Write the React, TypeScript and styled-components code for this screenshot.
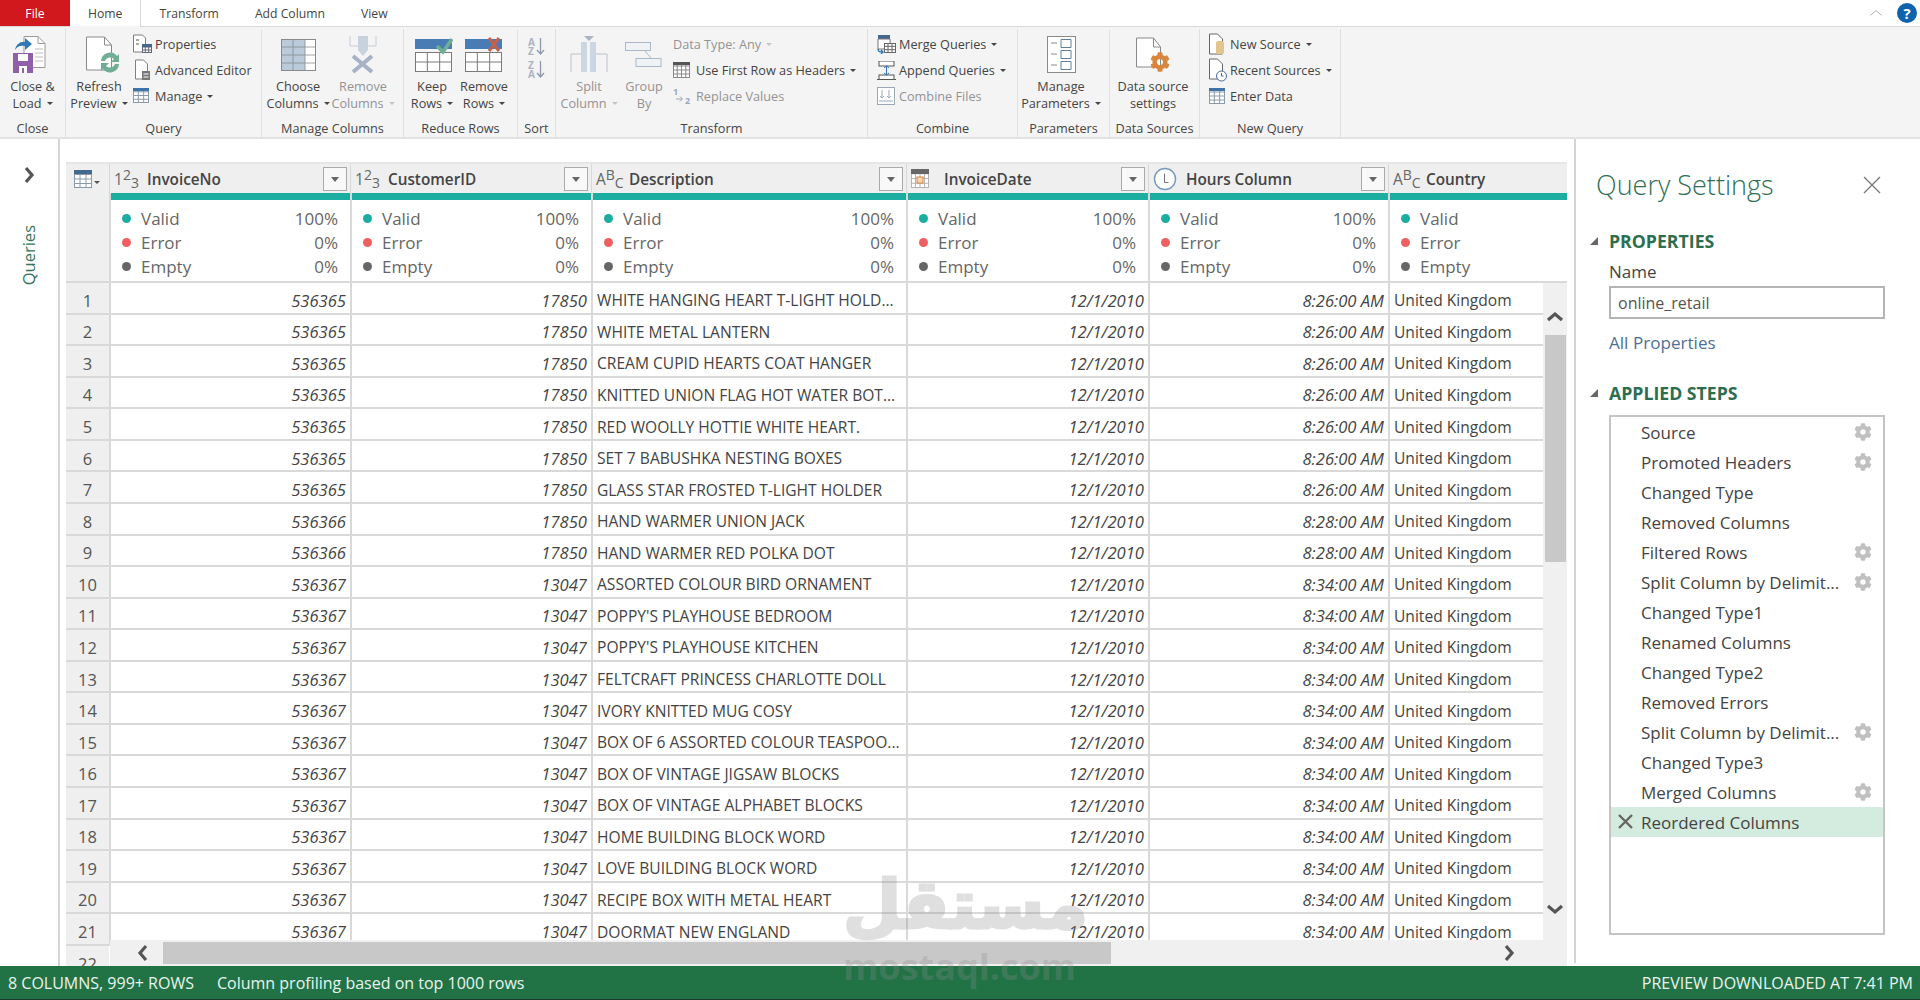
import React from "react";
import styled, { createGlobalStyle } from "styled-components";
import { FaCog } from "react-icons/fa";

const Global = createGlobalStyle`
  html, body { margin: 0; padding: 0; background: #fff; }
  body { font-family: "Open Sans", "Noto Sans", sans-serif; color: #444; }
  * { box-sizing: border-box; }
`;

const Page = styled.div`
  position: relative;
  width: 1920px;
  height: 1000px;
  overflow: hidden;
  display: flex;
  flex-direction: column;
  background: #fff;
`;

/* ---------- tabs ---------- */
const TabBar = styled.div`
  height: 27px;
  flex: none;
  display: flex;
  align-items: stretch;
  border-bottom: 1px solid #d8d8d8;
  font-size: 12.2px;
`;
const FileTab = styled.div`
  width: 70px;
  height: 26px;
  background: #d1181c;
  color: #fff;
  display: flex;
  align-items: center;
  justify-content: center;
`;
const Tab = styled.div<{ $active?: boolean }>`
  padding: 0 18px;
  height: ${(p) => (p.$active ? "27px" : "26px")};
  display: flex;
  align-items: center;
  color: #444;
  background: ${(p) => (p.$active ? "linear-gradient(#fff 90%, #f5f4f5)" : "#fff")};
  border-right: ${(p) => (p.$active ? "1px solid #d8d8d8" : "none")};
`;
const TabSpacer = styled.div`flex: 1;`;
const WindowControls = styled.div`
  display: flex;
  align-items: center;
  gap: 13px;
  padding-right: 3px;
`;
const HelpDot = styled.div`
  width: 20px;
  height: 20px;
  border-radius: 50%;
  background: #0f63ad;
  color: #fff;
  font-weight: 700;
  font-size: 15px;
  display: flex;
  align-items: center;
  justify-content: center;
`;

/* ---------- ribbon ---------- */
const Ribbon = styled.div`
  height: 112px;
  flex: none;
  display: flex;
  background: #f5f4f5;
  border-bottom: 2px solid #e2e2e2;
  font-size: 12.7px;
  color: #444;
`;
const Group = styled.div<{ $w: number }>`
  width: ${(p) => p.$w}px;
  flex: none;
  display: flex;
  flex-direction: column;
  margin-top: 2px;
  border-right: 1px solid #e0e0e0;
`;
const GroupBody = styled.div<{ $pl?: number }>`
  flex: 1;
  display: flex;
  padding-left: ${(p) => p.$pl ?? 0}px;
`;
const GroupLabel = styled.div`
  height: 18px;
  line-height: 18px;
  text-align: center;
  white-space: nowrap;
`;
const Large = styled.div<{ $w: number; $off?: boolean }>`
  width: ${(p) => p.$w}px;
  flex: none;
  display: flex;
  flex-direction: column;
  align-items: center;
  color: ${(p) => (p.$off ? "#939393" : "#444")};
  line-height: 17px;
  white-space: nowrap;
  text-align: center;
`;
const IconSlot = styled.div<{ $dx?: number }>`
  height: 49px;
  width: 100%;
  display: flex;
  align-items: center;
  justify-content: center;
  padding-top: 2px;
  padding-left: ${(p) => Math.max(p.$dx ?? 0, 0)}px;
  padding-right: ${(p) => Math.max(-(p.$dx ?? 0), 0)}px;
`;
const Caret = styled.span<{ $off?: boolean }>`
  display: inline-block;
  width: 0;
  height: 0;
  margin-left: 5px;
  vertical-align: 3px;
  border-left: 3.5px solid transparent;
  border-right: 3.5px solid transparent;
  border-top: 3.5px solid ${(p) => (p.$off ? "#c4c4c4" : "#444")};
`;
const SmallCol = styled.div<{ $ml?: number }>`
  display: flex;
  flex-direction: column;
  padding-top: 2px;
  margin-left: ${(p) => p.$ml ?? 0}px;
`;
const Small = styled.div<{ $off?: boolean }>`
  height: 26px;
  display: flex;
  align-items: center;
  white-space: nowrap;
  color: ${(p) => (p.$off ? "#939393" : "#444")};
`;
const SmallIcon = styled.span<{ $w?: number }>`
  width: ${(p) => p.$w ?? 22}px;
  flex: none;
  display: flex;
  align-items: center;
`;
const SortCol = styled.div`
  width: 100%;
  display: flex;
  flex-direction: column;
  align-items: center;
  gap: 4px;
  padding-top: 8px;
`;
const GearBadge = styled.span`
  display: flex;
  margin-left: -18px;
  margin-top: 14px;
  color: #d9853b;
`;

/* ---------- main ---------- */
const Main = styled.div`
  flex: 1;
  min-height: 0;
  display: flex;
`;
const Rail = styled.div`
  width: 60px;
  flex: none;
  border-right: 2px solid #d4d4d4;
  display: flex;
  flex-direction: column;
  align-items: center;
  padding-top: 26px;
`;
const RailLabel = styled.div`
  margin-top: 40px;
  writing-mode: vertical-rl;
  transform: rotate(180deg);
  color: #35735a;
  font-size: 16.5px;
  line-height: 20px;
`;
const GridArea = styled.div`
  flex: 1;
  min-width: 0;
  padding: 23px 7px 0 6px;
`;
const GridFrame = styled.div`
  position: relative;
  height: 100%;
  overflow: hidden;
`;
const COLS = "43px 241px 241px 315px 242px 240px 179px";
const HeadRow = styled.div`
  display: grid;
  grid-template-columns: ${COLS};
  height: 31px;
  background: #efefef;
  border-top: 2px solid #e6e6e6;
`;
const HeadCorner = styled.div`
  display: flex;
  align-items: center;
  padding-left: 8px;
  gap: 1px;
`;
const HeadCell = styled.div`
  position: relative;
  display: flex;
  align-items: center;
  border-left: 1px solid #d8d8d8;
  padding-left: 4px;
  min-width: 0;
`;
const TypeIcon = styled.span`
  width: 33px;
  flex: none;
  font-size: 15.5px;
  color: #666;
  white-space: nowrap;
  display: flex;
  align-items: center;
`;
const Sup = styled.span`
  font-size: 14px;
  display: inline-block;
  transform: translateY(-4px);
`;
const Sub = styled.span`
  font-size: 14px;
  display: inline-block;
  transform: translateY(4px);
`;
const HeadName = styled.span`
  font-weight: 600;
  font-size: 15.3px;
  color: #444;
`;
const FilterBtn = styled.span`
  position: absolute;
  right: 3px;
  top: 3px;
  width: 24px;
  height: 24px;
  background: #f8f8f8;
  border: 1px solid #aaa;
  display: flex;
  align-items: center;
  justify-content: center;
`;
const FilterArrow = styled.span`
  width: 0;
  height: 0;
  border-left: 4px solid transparent;
  border-right: 4px solid transparent;
  border-top: 5px solid #666;
`;
const Profile = styled.div`
  display: grid;
  grid-template-columns: ${COLS};
  height: 90px;
  border-bottom: 2px solid #d9d9d9;
`;
const ProfileStub = styled.div`
  background: #efefef;
`;
const ProfileCell = styled.div`
  border-left: 2px solid #d9d9d9;
  display: flex;
  flex-direction: column;
`;
const TealBar = styled.div`
  height: 7px;
  background: #1bad9f;
  margin-bottom: 6px;
  flex: none;
`;
const ProfileLine = styled.div`
  height: 24.3px;
  display: flex;
  align-items: center;
  padding: 0 12px 0 11px;
  font-size: 17px;
  color: #666;
`;
const Dot = styled.span<{ $c: string }>`
  width: 9px;
  height: 9px;
  border-radius: 50%;
  background: ${(p) => p.$c};
  margin-right: 10px;
  flex: none;
`;
const Pct = styled.span`
  margin-left: auto;
`;
const DataRow = styled.div`
  display: grid;
  grid-template-columns: ${COLS};
  height: 31.57px;
`;
const RowNo = styled.div`
  background: #efefef;
  border-bottom: 2px solid #d9d9d9;
  display: flex;
  align-items: center;
  justify-content: center;
  padding-top: 5px;
  font-size: 16.5px;
  color: #555;
`;
const Cell = styled.div<{ $num?: boolean }>`
  border-left: 2px solid #d9d9d9;
  border-bottom: 2px solid #d9d9d9;
  display: flex;
  align-items: center;
  justify-content: ${(p) => (p.$num ? "flex-end" : "flex-start")};
  padding: 5px ${(p) => (p.$num ? "4px" : "0")} 0 ${(p) => (p.$num ? "0" : "4px")};
  font-size: ${(p) => (p.$num ? "16.6px" : "15.6px")};
  font-style: ${(p) => (p.$num ? "italic" : "normal")};
  color: #444;
  white-space: nowrap;
  overflow: hidden;
`;
const VScroll = styled.div`
  position: absolute;
  right: 0;
  top: 121px;
  bottom: 26px;
  width: 24px;
  background: #f0f0f0;
  display: flex;
  justify-content: center;
`;
const VThumb = styled.div`
  position: absolute;
  left: 2px;
  right: 1px;
  top: 52px;
  height: 227px;
  background: #c8c8c8;
`;
const ScrollArrow = styled.span<{ $pos: string }>`
  position: absolute;
  ${(p) => p.$pos}
  display: flex;
`;
const HScroll = styled.div`
  position: absolute;
  left: 44px;
  right: 0;
  bottom: 0;
  height: 26px;
  background: #f0f0f0;
`;
const HThumb = styled.div`
  position: absolute;
  left: 53px;
  width: 948px;
  top: 2px;
  height: 22px;
  background: #c8c8c8;
`;

/* ---------- settings panel ---------- */
const Panel = styled.div`
  width: 346px;
  flex: none;
  border-left: 2px solid #d4d4d4;
  padding: 26px 0 0 33px;
  margin-bottom: 3px;
`;
const PanelHead = styled.div`
  height: 40px;
  margin-left: -13px;
  width: 285px;
  display: flex;
  align-items: center;
  justify-content: space-between;
`;
const PanelTitle = styled.div`
  font-size: 27px;
  font-weight: 300;
  line-height: 40px;
  color: #2f6f55;
`;
const SectionHead = styled.div<{ $mt: number }>`
  margin-top: ${(p) => p.$mt}px;
  margin-left: -19px;
  height: 24px;
  display: flex;
  align-items: center;
  font-size: 17.7px;
  font-weight: 700;
  color: #2c6e50;
`;
const Tri = styled.span`
  width: 0;
  height: 0;
  margin-right: 11px;
  border-left: 8px solid transparent;
  border-bottom: 8px solid #666;
`;
const FieldLabel = styled.div`
  margin-top: 8px;
  font-size: 17px;
  line-height: 22px;
  color: #444;
`;
const NameInput = styled.div`
  margin-top: 3px;
  width: 276px;
  height: 33px;
  border: 2px solid #b4b4b4;
  padding-left: 7px;
  display: flex;
  align-items: center;
  font-size: 16px;
  color: #555;
`;
const PanelLink = styled.div`
  margin-top: 12px;
  font-size: 17.1px;
  line-height: 24px;
  color: #4e7196;
`;
const Steps = styled.div`
  margin-top: 10px;
  width: 276px;
  height: 520px;
  border: 2px solid #c4c4c4;
`;
const Step = styled.div<{ $sel?: boolean }>`
  position: relative;
  height: 30px;
  display: flex;
  align-items: center;
  padding-left: 30px;
  font-size: 17px;
  color: #444;
  white-space: nowrap;
  background: ${(p) => (p.$sel ? "#d3ecdf" : "transparent")};
`;
const StepGear = styled.span`
  position: absolute;
  right: 11px;
  top: 6px;
  display: flex;
  color: #c0c0c0;
`;
const StepX = styled.span`
  position: absolute;
  left: 6px;
  top: 6px;
  display: flex;
`;

/* ---------- status ---------- */
const Status = styled.div`
  height: 34px;
  flex: none;
  background: #217346;
  border-bottom: 1px solid #1c3a2a;
  color: #e9f3ee;
  font-size: 16px;
  display: flex;
  align-items: center;
  padding: 0 7px 0 8px;
  white-space: nowrap;
`;
const StatusNote = styled.span`
  margin-left: 23px;
`;
const StatusRight = styled.span`
  margin-left: auto;
`;

/* ---------- watermark ---------- */
const Watermark = styled.div`
  position: absolute;
  left: 843px;
  top: 861px;
  width: 230px;
  pointer-events: none;
  text-align: center;
  color: #8c8c8c;
  opacity: 0.27;
  font-weight: 700;
  white-space: nowrap;
`;
const WatermarkAr = styled.div`
  font-family: "DejaVu Sans", sans-serif;
  font-size: 67px;
  line-height: 88px;
  -webkit-text-stroke: 3px #8c8c8c;
`;
const WatermarkEn = styled.div`
  font-family: "Open Sans", sans-serif;
  font-size: 36px;
  line-height: 36px;
`;

/* ---------- icons ---------- */
const G = "#7f7f7f";
const CloseLoadIcon = () => (
  <svg width="38" height="40" viewBox="0 0 38 40">
    <path d="M13 1.5h14l7 7v24H13z" fill="#fff" stroke="#9a9a9a" />
    <path d="M27 1.5v7h7" fill="none" stroke="#9a9a9a" />
    <path d="M24 14h8M24 18h8M24 22h8M24 26h8" stroke="#bbb" />
    <path d="M4 15c1-6 6-9 10-8V3l7 6-7 6v-4c-4-1-8 0-10 4z" fill="#2f77b5" />
    <path d="M2 18h20v20H2z" fill="#8f5fa9" />
    <path d="M7 19h10v7H7z" fill="#fff" />
    <path d="M8 31h8v7H8z" fill="#fff" />
    <path d="M11 33h2v5h-2z" fill="#8f5fa9" />
  </svg>
);
const RefreshIcon = () => (
  <svg width="40" height="38" viewBox="0 0 40 38">
    <path d="M.5 1h18l7 8v25H.5z" fill="#fff" stroke="#8a8a8a" />
    <path d="M18.500 1v8h7" fill="none" stroke="#8a8a8a" />
    <path d="M15 25a9 9 0 0 1 16-5l2-2v8h-8l3-3a5.500 5.500 0 0 0-9 2z" fill="#6fae94" />
    <path d="M33 28a9 9 0 0 1-16 5l-2 2v-8h8l-3 3a5.500 5.500 0 0 0 9-2z" fill="#6fae94" />
  </svg>
);
const Grid = ({ w, h, rows, cols, c = "#8a8a8a", head }: { w: number; h: number; rows: number; cols: number; c?: string; head?: string }) => {
  const lines: string[] = [];
  for (let i = 1; i < rows; i++) lines.push(`M0 ${(h * i) / rows}H${w}`);
  for (let i = 1; i < cols; i++) lines.push(`M${(w * i) / cols} 0V${h}`);
  return (
    <g>
      <rect x=".5" y=".5" width={w - 1} height={h - 1} fill="#fff" stroke={c} />
      <path d={lines.join("")} stroke={c} fill="none" />
      {head && <rect x="0" y="0" width={w} height="3" fill={head} />}
    </g>
  );
};
const PropertiesIcon = () => (
  <svg width="20" height="20" viewBox="0 0 20 20">
    <path d="M.5 1h9l3 3v14H.5z" fill="#fff" stroke={G} />
    <path d="M3 6h3M3 10h3" stroke="#555" />
    <g transform="translate(9 10)">
      <Grid w={10} h={9} rows={3} cols={3} c="#667" head="#44698f" />
    </g>
  </svg>
);
const EditorIcon = () => (
  <svg width="20" height="22" viewBox="0 0 20 22">
    <path d="M2.500 1h8l4 4v15h-12z" fill="#fff" stroke={G} />
    <rect x="9" y="12" width="8" height="9" fill="#777" />
    <path d="M10.500 15h5M10.500 18h5" stroke="#fff" />
  </svg>
);
const ManageIcon = () => (
  <svg width="17" height="16" viewBox="0 0 17 16">
    <Grid w={16} h={15} rows={4} cols={3} c="#8a9aaa" />
    <rect width="16" height="3" fill="#3f74a8" />
  </svg>
);
const ChooseIcon = () => (
  <svg width="35" height="32" viewBox="0 0 35 32">
    <rect x=".5" y=".5" width="34" height="31" fill="#fff" stroke="#8a8a8a" />
    <rect x="1" y="1" width="23" height="30" fill="#b9cadb" />
    <path d="M0 8h34M0 16h34M0 24h34M12 0v32M24 0v32" stroke="#8a8a8a" strokeWidth=".8" />
  </svg>
);
const RemoveColIcon = () => (
  <svg width="28" height="38" viewBox="0 0 28 38">
    <path d="M1 0v10h26V0" fill="none" stroke="#c5ced9" />
    <path d="M9 0h10v14l-5 6-5-6z" fill="#c7d2de" />
    <path d="M4 20l19 16M23 20L4 36" stroke="#a6b2c6" strokeWidth="4" />
  </svg>
);
const RowsIcon = ({ red }: { red?: boolean }) => (
  <svg width="38" height="36" viewBox="0 0 38 36">
    <rect x="0" y="2" width="37" height="10" fill="#477cb4" />
    <g transform="translate(0 15)">
      <Grid w={37} h={20} rows={2} cols={3} c="#7a7a7a" />
    </g>
    {red ? (
      <path d="M24 1l10 13M34 1L24 14" stroke="#c4604a" strokeWidth="3" />
    ) : (
      <path d="M22 9l6 6 9-13" fill="none" stroke="#6fae94" strokeWidth="3.500" />
    )}
  </svg>
);
const SortIcon = ({ top, bot }: { top: string; bot: string }) => (
  <svg width="18" height="19" viewBox="0 0 18 19" overflow="visible">
    <text x="0" y="9" fontFamily="Open Sans" fontWeight="700" fontSize="10" fill="#aab3c2">{top}</text>
    <text x="0" y="18" fontFamily="Open Sans" fontWeight="700" fontSize="10" fill="#aab3c2">{bot}</text>
    <path d="M12.500 1v16M9 13l3.500 4 3.500-4" fill="none" stroke="#8e98a8" strokeWidth="1.300" />
  </svg>
);
const SplitIcon = () => (
  <svg width="38" height="38" viewBox="0 0 38 38">
    <path d="M1 36V18h11M37 36V18H26" fill="none" stroke="#b8c2cd" />
    <rect x="11" y="6" width="6" height="30" fill="#ccd6e0" />
    <rect x="20" y="6" width="6" height="30" fill="#ccd6e0" />
    <path d="M14 0h10l-5 5z" fill="#aab4c2" />
  </svg>
);
const GroupIcon = () => (
  <svg width="38" height="26" viewBox="0 0 38 26">
    <rect x=".5" y=".5" width="25" height="8" fill="#f0f3f6" stroke="#aab8c8" />
    <rect x="11" y="16.500" width="25" height="8" fill="#f0f3f6" stroke="#aab8c8" />
    <path d="M20 9l6 7" stroke="#aab8c8" />
  </svg>
);
const FirstRowIcon = () => (
  <svg width="18" height="17" viewBox="0 0 18 17">
    <Grid w={17} h={16} rows={4} cols={4} c="#888" />
    <rect width="17" height="3" fill="#555" />
  </svg>
);
const ReplaceIcon = () => (
  <svg width="20" height="20" viewBox="0 0 20 20">
    <text x="0" y="9" fontFamily="Open Sans" fontSize="9" fontWeight="700" fill="#9aa8b8">1</text>
    <path d="M3 13h6M7 10.500l2.500 2.500L7 15.500" fill="none" stroke="#9aa8b8" />
    <text x="12" y="18" fontFamily="Open Sans" fontSize="9" fontWeight="700" fill="#9aa8b8">2</text>
  </svg>
);
const MergeIcon = () => (
  <svg width="20" height="19" viewBox="0 0 20 19">
    <path d="M1 0h12v4H1z" fill="#44698f" />
    <path d="M1 4h12v10H1z" fill="#fff" stroke="#777" />
    <g transform="translate(7 8)">
      <Grid w={12} h={10} rows={3} cols={3} c="#666" />
    </g>
    <path d="M1 14c0 3 2 3 5 3M4 15l2 2-2 2" fill="none" stroke="#2f77b5" strokeWidth="1.400" />
  </svg>
);
const AppendIcon = () => (
  <svg width="19" height="19" viewBox="0 0 19 19">
    <rect x="2" y="0" width="15" height="5" fill="#fff" stroke="#555" />
    <rect x="2" y="14" width="15" height="4.500" fill="#fff" stroke="#555" />
    <path d="M9.500 5v9M7 7l2.500-2L12 7M7 12l2.500 2 2.500-2" fill="none" stroke="#2f77b5" />
    <path d="M0 18.500h19" stroke="#555" />
  </svg>
);
const CombineIcon = () => (
  <svg width="18" height="18" viewBox="0 0 18 18">
    <rect x=".5" y=".5" width="17" height="17" fill="#fff" stroke="#9aa8b8" />
    <path d="M5 3v8M3 9l2 2 2-2M12 3v8M10 9l2 2 2-2M2 14h14" fill="none" stroke="#9aa8b8" />
  </svg>
);
const ParamIcon = () => (
  <svg width="29" height="37" viewBox="0 0 29 37">
    <rect x=".5" y=".5" width="28" height="36" fill="#fff" stroke="#8a8a8a" />
    <path d="M4 7h6M4 18h6M4 29h6" stroke="#8a8a8a" />
    <path d="M14 3.500h10v8H14zM14 14.500h10v8H14zM14 25.500h10v8H14z" fill="#fff" stroke="#5f7f9c" />
  </svg>
);
const DataSourceIcon = () => (
  <svg width="32" height="36" viewBox="0 0 32 36">
    <path d="M.5 1h17l7 9v20H.5z" fill="#fff" stroke="#8a8a8a" />
    <path d="M17.500 1v9h7" fill="none" stroke="#8a8a8a" />
  </svg>
);
const NewSourceIcon = () => (
  <svg width="17" height="22" viewBox="0 0 17 22">
    <path d="M.5 1h8l5 5v15H.5z" fill="#fff" stroke="#666" />
    <rect x="7" y="8" width="8" height="13" rx="2" fill="#e2c48d" />
  </svg>
);
const RecentIcon = () => (
  <svg width="18" height="24" viewBox="0 0 18 24">
    <path d="M.5 1h8l5 5v15H.5z" fill="#fff" stroke="#666" />
    <circle cx="12.500" cy="18" r="5" fill="#fff" stroke="#44698f" />
    <path d="M12.500 15v3h2" fill="none" stroke="#44698f" />
  </svg>
);
const EnterIcon = () => (
  <svg width="16" height="16" viewBox="0 0 16 16">
    <Grid w={16} h={16} rows={4} cols={3} c="#8a9aaa" />
    <rect width="16" height="3" fill="#3f74a8" />
  </svg>
);
const TableCornerIcon = () => (
  <>
    <svg width="19" height="18" viewBox="0 0 19 18">
      <Grid w={18} h={18} rows={4} cols={3} c="#8a9aaa" />
      <rect width="18" height="4" fill="#44698f" />
    </svg>
    <svg width="6" height="12" viewBox="0 0 6 12">
      <path d="M0 8h6l-3 3z" fill="#555" />
    </svg>
  </>
);
const CalIcon = () => (
  <svg width="18" height="19" viewBox="0 0 18 19">
    <Grid w={18} h={19} rows={4} cols={4} c="#b5b5b5" />
    <rect width="18" height="5" fill="#666" />
    <rect x="6" y="8" width="6" height="6" fill="#f6d9b5" stroke="#d8853b" />
  </svg>
);
const ClockIcon = () => (
  <svg width="24" height="24" viewBox="0 0 24 24">
    <circle cx="12" cy="12" r="10.500" fill="#fff" stroke="#7a9cc0" strokeWidth="1.500" />
    <path d="M11.500 6.500v9h4" fill="none" stroke="#777" />
  </svg>
);
const Chevron = ({ d, s = 18, w = 3.2, c = "#555" }: { d: "l" | "r" | "u" | "d"; s?: number; w?: number; c?: string }) => {
  const path = { l: "M12 3L6 10l6 7", r: "M7 3l6 7-6 7", u: "M3 13l7-6 7 6", d: "M3 7l7 6 7-6" }[d];
  return (
    <svg width={s} height={s} viewBox="0 0 20 20">
      <path d={path} fill="none" stroke={c} strokeWidth={w} />
    </svg>
  );
};
const Num123 = () => (
  <TypeIcon>1<Sup>2</Sup><Sub>3</Sub></TypeIcon>
);
const Abc = () => (
  <TypeIcon>A<Sup>B</Sup><Sub>C</Sub></TypeIcon>
);

/* ---------- data ---------- */
const DESC = [
  "WHITE HANGING HEART T-LIGHT HOLD...",
  "WHITE METAL LANTERN",
  "CREAM CUPID HEARTS COAT HANGER",
  "KNITTED UNION FLAG HOT WATER BOT...",
  "RED WOOLLY HOTTIE WHITE HEART.",
  "SET 7 BABUSHKA NESTING BOXES",
  "GLASS STAR FROSTED T-LIGHT HOLDER",
  "HAND WARMER UNION JACK",
  "HAND WARMER RED POLKA DOT",
  "ASSORTED COLOUR BIRD ORNAMENT",
  "POPPY'S PLAYHOUSE BEDROOM",
  "POPPY'S PLAYHOUSE KITCHEN",
  "FELTCRAFT PRINCESS CHARLOTTE DOLL",
  "IVORY KNITTED MUG COSY",
  "BOX OF 6 ASSORTED COLOUR TEASPOO...",
  "BOX OF VINTAGE JIGSAW BLOCKS",
  "BOX OF VINTAGE ALPHABET BLOCKS",
  "HOME BUILDING BLOCK WORD",
  "LOVE BUILDING BLOCK WORD",
  "RECIPE BOX WITH METAL HEART",
  "DOORMAT NEW ENGLAND",
];
const rows = DESC.map((d, i) => ({
  n: i + 1,
  inv: i < 7 ? "536365" : i < 9 ? "536366" : "536367",
  cust: i < 9 ? "17850" : "13047",
  d,
  date: "12/1/2010",
  time: i < 7 ? "8:26:00 AM" : i < 9 ? "8:28:00 AM" : "8:34:00 AM",
  country: "United Kingdom",
}));
const HEADERS: { name: string; icon: React.ReactNode; filter: boolean }[] = [
  { name: "InvoiceNo", icon: <Num123 />, filter: true },
  { name: "CustomerID", icon: <Num123 />, filter: true },
  { name: "Description", icon: <Abc />, filter: true },
  { name: "InvoiceDate", icon: <TypeIcon><CalIcon /></TypeIcon>, filter: true },
  { name: "Hours Column", icon: <TypeIcon><ClockIcon /></TypeIcon>, filter: true },
  { name: "Country", icon: <Abc />, filter: false },
];
const STEPS: [string, boolean][] = [
  ["Source", true],
  ["Promoted Headers", true],
  ["Changed Type", false],
  ["Removed Columns", false],
  ["Filtered Rows", true],
  ["Split Column by Delimit...", true],
  ["Changed Type1", false],
  ["Renamed Columns", false],
  ["Changed Type2", false],
  ["Removed Errors", false],
  ["Split Column by Delimit...", true],
  ["Changed Type3", false],
  ["Merged Columns", true],
];

export default function App() {
  return (
    <Page>
      <Global />
      <TabBar>
        <FileTab>File</FileTab>
        <Tab $active>Home</Tab>
        <Tab>Transform</Tab>
        <Tab>Add Column</Tab>
        <Tab>View</Tab>
        <TabSpacer />
        <WindowControls>
          <Chevron d="u" s={16} w={1} c="#999" />
          <HelpDot>?</HelpDot>
        </WindowControls>
      </TabBar>

      <Ribbon>
        <Group $w={66}>
          <GroupBody>
            <Large $w={65}>
              <IconSlot $dx={-6}><CloseLoadIcon /></IconSlot>
              <span>Close &amp;</span>
              <span>Load<Caret /></span>
            </Large>
          </GroupBody>
          <GroupLabel>Close</GroupLabel>
        </Group>

        <Group $w={196}>
          <GroupBody $pl={1}>
            <Large $w={64}>
              <IconSlot $dx={14}><RefreshIcon /></IconSlot>
              <span>Refresh</span>
              <span>Preview<Caret /></span>
            </Large>
            <SmallCol $ml={2}>
              <Small><SmallIcon><PropertiesIcon /></SmallIcon>Properties</Small>
              <Small><SmallIcon><EditorIcon /></SmallIcon>Advanced Editor</Small>
              <Small><SmallIcon><ManageIcon /></SmallIcon>Manage<Caret /></Small>
            </SmallCol>
          </GroupBody>
          <GroupLabel>Query</GroupLabel>
        </Group>

        <Group $w={142}>
          <GroupBody $pl={4}>
            <Large $w={64}>
              <IconSlot><ChooseIcon /></IconSlot>
              <span>Choose</span>
              <span>Columns<Caret /></span>
            </Large>
            <Large $w={66} $off>
              <IconSlot><RemoveColIcon /></IconSlot>
              <span>Remove</span>
              <span>Columns<Caret $off /></span>
            </Large>
          </GroupBody>
          <GroupLabel>Manage Columns</GroupLabel>
        </Group>

        <Group $w={114}>
          <GroupBody $pl={4}>
            <Large $w={48}>
              <IconSlot $dx={4}><RowsIcon /></IconSlot>
              <span>Keep</span>
              <span>Rows<Caret /></span>
            </Large>
            <Large $w={56}>
              <IconSlot><RowsIcon red /></IconSlot>
              <span>Remove</span>
              <span>Rows<Caret /></span>
            </Large>
          </GroupBody>
          <GroupLabel>Reduce Rows</GroupLabel>
        </Group>

        <Group $w={38}>
          <GroupBody>
            <SortCol>
              <SortIcon top="A" bot="Z" />
              <SortIcon top="Z" bot="A" />
            </SortCol>
          </GroupBody>
          <GroupLabel>Sort</GroupLabel>
        </Group>

        <Group $w={312}>
          <GroupBody $pl={2}>
            <Large $w={62} $off>
              <IconSlot><SplitIcon /></IconSlot>
              <span>Split</span>
              <span>Column<Caret $off /></span>
            </Large>
            <Large $w={48} $off>
              <IconSlot><GroupIcon /></IconSlot>
              <span>Group</span>
              <span>By</span>
            </Large>
            <SmallCol $ml={5}>
              <Small $off>Data Type: Any<Caret $off /></Small>
              <Small><SmallIcon $w={23}><FirstRowIcon /></SmallIcon>Use First Row as Headers<Caret /></Small>
              <Small $off><SmallIcon $w={23}><ReplaceIcon /></SmallIcon>Replace Values</Small>
            </SmallCol>
          </GroupBody>
          <GroupLabel>Transform</GroupLabel>
        </Group>

        <Group $w={150}>
          <GroupBody $pl={9}>
            <SmallCol>
              <Small><SmallIcon><MergeIcon /></SmallIcon>Merge Queries<Caret /></Small>
              <Small><SmallIcon><AppendIcon /></SmallIcon>Append Queries<Caret /></Small>
              <Small $off><SmallIcon><CombineIcon /></SmallIcon>Combine Files</Small>
            </SmallCol>
          </GroupBody>
          <GroupLabel>Combine</GroupLabel>
        </Group>

        <Group $w={92}>
          <GroupBody>
            <Large $w={86}>
              <IconSlot><ParamIcon /></IconSlot>
              <span>Manage</span>
              <span>Parameters<Caret /></span>
            </Large>
          </GroupBody>
          <GroupLabel>Parameters</GroupLabel>
        </Group>

        <Group $w={90}>
          <GroupBody>
            <Large $w={86}>
              <IconSlot>
                <DataSourceIcon />
                <GearBadge><FaCog size={20} /></GearBadge>
              </IconSlot>
              <span>Data source</span>
              <span>settings</span>
            </Large>
          </GroupBody>
          <GroupLabel>Data Sources</GroupLabel>
        </Group>

        <Group $w={141}>
          <GroupBody $pl={9}>
            <SmallCol>
              <Small><SmallIcon $w={21}><NewSourceIcon /></SmallIcon>New Source<Caret /></Small>
              <Small><SmallIcon $w={21}><RecentIcon /></SmallIcon>Recent Sources<Caret /></Small>
              <Small><SmallIcon $w={21}><EnterIcon /></SmallIcon>Enter Data</Small>
            </SmallCol>
          </GroupBody>
          <GroupLabel>New Query</GroupLabel>
        </Group>
      </Ribbon>

      <Main>
        <Rail>
          <Chevron d="r" s={20} />
          <RailLabel>Queries</RailLabel>
        </Rail>
        <GridArea>
          <GridFrame>
            <HeadRow>
              <HeadCorner><TableCornerIcon /></HeadCorner>
              {HEADERS.map((h) => (
                <HeadCell key={h.name}>
                  {h.icon}
                  <HeadName>{h.name}</HeadName>
                  {h.filter && <FilterBtn><FilterArrow /></FilterBtn>}
                </HeadCell>
              ))}
            </HeadRow>
            <Profile>
              <ProfileStub />
              {HEADERS.map((h) => (
                <ProfileCell key={h.name}>
                  <TealBar />
                  <ProfileLine><Dot $c="#1bad9f" />Valid{h.filter && <Pct>100%</Pct>}</ProfileLine>
                  <ProfileLine><Dot $c="#ee6060" />Error{h.filter && <Pct>0%</Pct>}</ProfileLine>
                  <ProfileLine><Dot $c="#666" />Empty{h.filter && <Pct>0%</Pct>}</ProfileLine>
                </ProfileCell>
              ))}
            </Profile>
            {rows.map((r) => (
              <DataRow key={r.n}>
                <RowNo>{r.n}</RowNo>
                <Cell $num>{r.inv}</Cell>
                <Cell $num>{r.cust}</Cell>
                <Cell>{r.d}</Cell>
                <Cell $num>{r.date}</Cell>
                <Cell $num>{r.time}</Cell>
                <Cell>{r.country}</Cell>
              </DataRow>
            ))}
            <DataRow>
              <RowNo>22</RowNo>
            </DataRow>
            <VScroll>
              <VThumb />
              <ScrollArrow $pos="top: 24px; left: 2px;"><Chevron d="u" s={20} /></ScrollArrow>
              <ScrollArrow $pos="bottom: 21px; left: 2px;"><Chevron d="d" s={20} /></ScrollArrow>
            </VScroll>
            <HScroll>
              <HThumb />
              <ScrollArrow $pos="top: 3px; left: 24px;"><Chevron d="l" s={20} /></ScrollArrow>
              <ScrollArrow $pos="top: 3px; right: 48px;"><Chevron d="r" s={20} /></ScrollArrow>
            </HScroll>
          </GridFrame>
        </GridArea>

        <Panel>
          <PanelHead>
            <PanelTitle>Query Settings</PanelTitle>
            <svg width="18" height="18" viewBox="0 0 18 18">
              <path d="M1 1l16 16M17 1L1 17" stroke="#777" strokeWidth="1.300" />
            </svg>
          </PanelHead>
          <SectionHead $mt={24}><Tri />PROPERTIES</SectionHead>
          <FieldLabel>Name</FieldLabel>
          <NameInput>online_retail</NameInput>
          <PanelLink>All Properties</PanelLink>
          <SectionHead $mt={26}><Tri />APPLIED STEPS</SectionHead>
          <Steps>
            {STEPS.map(([s, gear], i) => (
              <Step key={i}>
                {s}
                {gear && <StepGear><FaCog size={18} /></StepGear>}
              </Step>
            ))}
            <Step $sel>
              <StepX>
                <svg width="17" height="17" viewBox="0 0 17 17">
                  <path d="M2 2l13 13M15 2L2 15" stroke="#666" strokeWidth="2.400" />
                </svg>
              </StepX>
              Reordered Columns
            </Step>
          </Steps>
        </Panel>
      </Main>

      <Status>
        8 COLUMNS, 999+ ROWS
        <StatusNote>Column profiling based on top 1000 rows</StatusNote>
        <StatusRight>PREVIEW DOWNLOADED AT 7:41 PM</StatusRight>
      </Status>

      <Watermark>
        <WatermarkAr>مستقل</WatermarkAr>
        <WatermarkEn>mostaql.com</WatermarkEn>
      </Watermark>
    </Page>
  );
}
